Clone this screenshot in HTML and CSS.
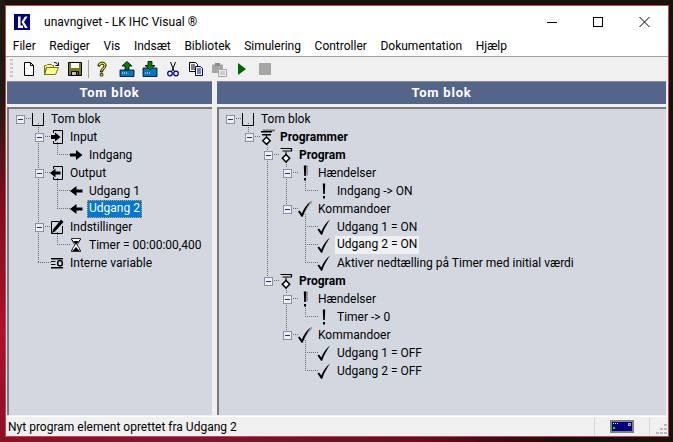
FILE: index.html
```html
<!DOCTYPE html>
<html lang="da">
<head>
<meta charset="utf-8">
<title>unavngivet - LK IHC Visual</title>
<link rel="stylesheet" href="styles.css">
</head>
<body>
<svg class="defs" width="0" height="0">
  <defs>
    <symbol id="box" viewBox="0 0 9 9"><rect x=".5" y=".5" width="8" height="8" fill="#eceef2" stroke="#8d939c"/><path d="M2 4.500h5" stroke="#1b2f8f"/></symbol>
    <symbol id="block" viewBox="0 0 14 16"><path d="M1.500 2v12.500h11V2" fill="none" stroke="#000"/></symbol>
    <symbol id="input" viewBox="0 0 14 16"><path d="M3.500 4V1.500h9v13h-9V12" fill="none" stroke="#000"/><path d="M1 6h4V3.500L10.500 8 5 12.500V10H1z"/></symbol>
    <symbol id="output" viewBox="0 0 14 16"><path d="M3.500 4V1.500h9v13h-9V12" fill="none" stroke="#000"/><path d="M10.500 6.500h-5V3.500L0 8l5.500 4.500v-3h5z"/></symbol>
    <symbol id="right" viewBox="0 0 14 16"><path d="M1 6.500h6V3l6.500 5L7 13V9.500H1z"/></symbol>
    <symbol id="left" viewBox="0 0 14 16"><path d="M13.500 6.500h-6V3L1 8l6.500 5V9.500h6z"/></symbol>
    <symbol id="settings" viewBox="0 0 14 16"><path d="M9 2.500H1.500v12h11V7" fill="none" stroke="#000"/><path d="M11 .5l2.500 2.500L5 12.500l-3 1.500 1-3.500z"/></symbol>
    <symbol id="hourglass" viewBox="0 0 14 16"><path d="M2.500 1.500h9v1.500h-1v1.500L8 8l2.500 3.500V13h1v1.500h-9V13h1v-1.500L6 8 3.500 4.500V3h-1z" fill="#fff" stroke="#000" stroke-width=".8"/><path d="M4 4h6L7 8zM3.500 14 7 10l3.500 4z"/></symbol>
    <symbol id="vars" viewBox="0 0 14 16"><path d="M1 3h12v1.500H1zM1 12h12v1.500H1z"/><path d="M1 6.500h4.500M1 9.500h4.500" stroke="#000" fill="none"/><rect x="7.750" y="5.750" width="4.500" height="5" rx="1.500" fill="none" stroke="#000" stroke-width="1.500"/></symbol>
    <symbol id="progs" viewBox="0 0 15 16"><path d="M3 .5h12v2H3z" fill="#777"/><path d="M1 2h11v1.500H1zM2 5h9v1.500H2zM6 6h1v2H6z"/><path d="M6.500 8l3.700 3.700-3.700 3.700-3.700-3.700z" fill="#fff" stroke="#000" stroke-width="1.500"/></symbol>
    <symbol id="prog" viewBox="0 0 14 16"><path d="M1.500 1.500h11v2.500h-9" fill="none" stroke="#000" stroke-width="1.200"/><path d="M6.500 4.500h1V8h-1z"/><path d="M7 7.500l3.700 3.700L7 15l-3.700-3.800z" fill="#fff" stroke="#000" stroke-width="1.500"/></symbol>
    <symbol id="bang" viewBox="0 0 14 16"><path d="M5.800 .5h2.400L7.800 11H6.200zM6 13h2v2.500H6z"/></symbol>
    <symbol id="bangs" viewBox="0 0 14 16"><path d="M7.500 .5h2.500v10H7.500z" fill="#999"/><path d="M5.800 .5h2.400L7.800 11H6.200zM6 13h2v2.500H6z"/></symbol>
    <symbol id="check" viewBox="0 0 14 16"><path d="M.5 10.500l1.500-1 2.300 3C6 8 9 3.500 13 .5 10 5 7 10 5.200 15.800H4z"/></symbol>
    <symbol id="checks" viewBox="0 0 14 16"><path d="M5 14C7 9 10 4 14 .5" fill="none" stroke="#999" stroke-width="1.800"/><path d="M0 10.500l1.500-1 2.300 3C5.500 8 8.500 3.500 12.500 .5 9.500 5 6.500 10 4.700 15.800H3.500z"/></symbol>
  </defs>
</svg>

<div class="window">
  <header class="titlebar">
    <svg class="logo" width="16" height="16" viewBox="0 0 16 16"><rect width="16" height="16" fill="#000080"/><path d="M4 2.500h2.500v9H9V14H4zM7.500 8 11 2.500h2.500L10 8l3.800 6h-2.700z" fill="#fff"/></svg>
    <span class="title">unavngivet - LK IHC Visual ®</span>
    <div class="controls">
      <svg width="46" height="14" viewBox="0 0 46 14"><path d="M0 7.500h10" stroke="#000"/></svg>
      <svg width="46" height="14" viewBox="0 0 46 14"><rect x=".5" y="2.500" width="9" height="9" fill="none" stroke="#000"/></svg>
      <svg width="12" height="14" viewBox="0 0 12 14"><path d="M.5 2l10 10M10.500 2l-10 10" stroke="#000" fill="none"/></svg>
    </div>
  </header>

  <nav class="menu">
    <span class="menu-item">Filer</span>
    <span class="menu-item">Rediger</span>
    <span class="menu-item">Vis</span>
    <span class="menu-item">Indsæt</span>
    <span class="menu-item">Bibliotek</span>
    <span class="menu-item">Simulering</span>
    <span class="menu-item">Controller</span>
    <span class="menu-item">Dokumentation</span>
    <span class="menu-item">Hjælp</span>
  </nav>

  <div class="toolbar">
    <span class="grip"></span>
    <svg class="tool" width="16" height="16" viewBox="0 0 16 16"><path d="M3.500 1.500h6l3 3v10h-9z" fill="#fff" stroke="#000"/><path d="M9.500 1.500v3h3" fill="none" stroke="#000"/></svg>
    <svg class="tool" width="16" height="16" viewBox="0 0 16 16"><path d="M.5 13.500v-9h2l1-1h4l1 1h1v2h-7l-2 7 2-7h12l-3 7z" fill="#ffff99" stroke="#7a7a00"/><path d="M10 1.500c2 0 3 .5 3.500 2M14.500 1.500v3h-3" fill="none" stroke="#000"/></svg>
    <svg class="tool t-save" width="16" height="16" viewBox="0 0 16 16"><path d="M1.500 1.500h13v13h-13z" fill="#808000" stroke="#000"/><path d="M4 2h8v5H4z" fill="#fff"/><path d="M4.500 10.500h7v4h-7z" fill="#c0c0c0" stroke="#000"/><path d="M9 11h1.500v3H9z"/></svg>
    <span class="tool-sep"></span>
    <svg class="tool t-help" width="16" height="16" viewBox="0 0 16 16"><path d="M4 5c0-5 8-5 8-.500 0 3-3.500 3.500-3.500 6.500H6.500c0-3.500 3.500-4 3.500-6.500 0-2-4-1.500-4 .500z" fill="#ff0" stroke="#000"/><path d="M6.300 12.500h2.500v2.500H6.300z" fill="#ff0" stroke="#000" stroke-width=".8"/></svg>
    <svg class="tool" width="16" height="16" viewBox="0 0 16 16"><path d="M1 9h14v6.500H1z" fill="#0078c8" stroke="#000" stroke-width=".8"/><path d="M3 12h1M5 12h1M7 12h1" stroke="#fff"/><path d="M8 .500 13 5h-3v4H6V5H3z" fill="#008000" stroke="#000" stroke-width=".8"/></svg>
    <svg class="tool" width="16" height="16" viewBox="0 0 16 16"><path d="M1 7h14v8.500H1z" fill="#0078c8" stroke="#000" stroke-width=".8"/><path d="M3 12h1M5 12h1M7 12h1" stroke="#fff"/><path d="M6 .500h4v4h3L8 9 3 4.500h3z" fill="#008000" stroke="#000" stroke-width=".8"/></svg>
    <svg class="tool" width="16" height="16" viewBox="0 0 16 16"><path d="M5.500 1 9 10M10.500 1 7 10" fill="none" stroke="#000"/><circle cx="5" cy="12.500" r="2.300" fill="none" stroke="#000080" stroke-width="1.200"/><circle cx="11" cy="12.500" r="2.300" fill="none" stroke="#000080" stroke-width="1.200"/></svg>
    <svg class="tool" width="16" height="16" viewBox="0 0 16 16"><path d="M1.500 1.500h6l2 2v7h-8z" fill="#fff" stroke="#000"/><path d="M3 4h4M3 6h4M3 8h4" stroke="#000"/><path d="M7.500 5.500h5l2 2v7h-7z" fill="#fff" stroke="#000080"/><path d="M9 8h4M9 10h4M9 12h4" stroke="#000080"/></svg>
    <svg class="tool" width="16" height="16" viewBox="0 0 16 16"><path d="M1 3.500h11V12H1z" fill="#a6a6a6"/><path d="M4 2h5v3H4z" fill="#8a8a8a"/><path d="M7.500 8.500h8v7h-8z" fill="#f0f0f0" stroke="#a6a6a6"/><path d="M9 11h5M9 13h5" stroke="#a6a6a6"/></svg>
    <svg class="tool" width="16" height="16" viewBox="0 0 16 16"><path d="M4 2l8 6-8 6z" fill="#006400"/></svg>
    <svg class="tool" width="16" height="16" viewBox="0 0 16 16"><rect x="2" y="2" width="12" height="12" fill="#a6a6a6"/></svg>
  </div>

  <main class="panes">
    <section class="pane pane-left">
      <h2 class="pane-head">Tom blok</h2>
      <div class="pane-body">
        <svg class="lines" width="204" height="306" viewBox="7 107 204 306">
          <path d="M24 118.500h8M38.500 123v139M43 136.500h8M43 172.500h8M43 226.500h8M38 262.500h13M57.500 142v12.500M57 154.500h13M57.500 178v30.500M57 190.500h13M57 208.500h13M57.500 232v12.500M57 244.500h13"/>
        </svg>
        <ul class="tree">
          <li class="row l0"><svg class="bx"><use href="#box"/></svg><svg class="ic"><use href="#block"/></svg><span class="tx">Tom blok</span></li>
          <li class="row l1"><svg class="bx"><use href="#box"/></svg><svg class="ic"><use href="#input"/></svg><span class="tx">Input</span></li>
          <li class="row l2"><svg class="ic"><use href="#right"/></svg><span class="tx">Indgang</span></li>
          <li class="row l1"><svg class="bx"><use href="#box"/></svg><svg class="ic"><use href="#output"/></svg><span class="tx">Output</span></li>
          <li class="row l2"><svg class="ic"><use href="#left"/></svg><span class="tx">Udgang 1</span></li>
          <li class="row l2"><svg class="ic"><use href="#left"/></svg><span class="tx selected">Udgang 2</span></li>
          <li class="row l1"><svg class="bx"><use href="#box"/></svg><svg class="ic"><use href="#settings"/></svg><span class="tx">Indstillinger</span></li>
          <li class="row l2"><svg class="ic"><use href="#hourglass"/></svg><span class="tx">Timer = 00:00:00,400</span></li>
          <li class="row l1b"><svg class="ic"><use href="#vars"/></svg><span class="tx">Interne variable</span></li>
        </ul>
      </div>
    </section>
    <section class="pane pane-right">
      <h2 class="pane-head">Tom blok</h2>
      <div class="pane-body">
        <svg class="lines" width="449" height="306" viewBox="217 107 449 306">
          <path d="M234 118.500h8M248.500 123v9M253 136.500h7M267.500 141v135M272 154.500h7M286.500 160v8M291 172.500h7M286.500 177v27M291 208.500h7M305.500 178v12.500M305 190.500h13M305.500 214v48.500M305 226.500h13M305 244.500h13M305 262.500h13M272 280.500h7M286.500 286v8M291 298.500h7M286.500 303v27M291 334.500h7M305.500 304v12.500M305 316.500h13M305.500 340v30.500M305 352.500h13M305 370.500h13"/>
        </svg>
        <ul class="tree">
          <li class="row r0"><svg class="bx"><use href="#box"/></svg><svg class="ic"><use href="#block"/></svg><span class="tx">Tom blok</span></li>
          <li class="row r1"><svg class="bx"><use href="#box"/></svg><svg class="ic ic-w"><use href="#progs"/></svg><span class="tx bold">Programmer</span></li>
          <li class="row r2"><svg class="bx"><use href="#box"/></svg><svg class="ic"><use href="#prog"/></svg><span class="tx bold">Program</span></li>
          <li class="row r3"><svg class="bx"><use href="#box"/></svg><svg class="ic"><use href="#bangs"/></svg><span class="tx">Hændelser</span></li>
          <li class="row r4"><svg class="ic"><use href="#bang"/></svg><span class="tx">Indgang -&gt; ON</span></li>
          <li class="row r3"><svg class="bx"><use href="#box"/></svg><svg class="ic"><use href="#checks"/></svg><span class="tx">Kommandoer</span></li>
          <li class="row r4"><svg class="ic"><use href="#check"/></svg><span class="tx">Udgang 1 = ON</span></li>
          <li class="row r4"><svg class="ic"><use href="#check"/></svg><span class="tx hover">Udgang 2 = ON</span></li>
          <li class="row r4"><svg class="ic"><use href="#check"/></svg><span class="tx">Aktiver nedtælling på Timer med initial værdi</span></li>
          <li class="row r2"><svg class="bx"><use href="#box"/></svg><svg class="ic"><use href="#prog"/></svg><span class="tx bold">Program</span></li>
          <li class="row r3"><svg class="bx"><use href="#box"/></svg><svg class="ic"><use href="#bangs"/></svg><span class="tx">Hændelser</span></li>
          <li class="row r4"><svg class="ic"><use href="#bang"/></svg><span class="tx">Timer -&gt; 0</span></li>
          <li class="row r3"><svg class="bx"><use href="#box"/></svg><svg class="ic"><use href="#checks"/></svg><span class="tx">Kommandoer</span></li>
          <li class="row r4"><svg class="ic"><use href="#check"/></svg><span class="tx">Udgang 1 = OFF</span></li>
          <li class="row r4"><svg class="ic"><use href="#check"/></svg><span class="tx">Udgang 2 = OFF</span></li>
        </ul>
      </div>
    </section>
  </main>

  <footer class="status">
    <span class="status-text">Nyt program element oprettet fra Udgang 2</span>
    <span class="status-cell">
      <svg width="24" height="13" viewBox="0 0 24 13"><rect x="1" y="1" width="22" height="11" fill="#000080" stroke="#808080" stroke-width="2"/><path d="M3 3h1v1H3zM5 3h1v1H5zM7 3h1v1H7z" fill="#fff"/><rect x="3" y="7" width="2" height="2" fill="#00ff00"/><rect x="18.500" y="3.500" width="2" height="2" fill="#444" stroke="#aaa"/></svg>
    </span>
    <span class="status-grip">
      <svg width="12" height="12" viewBox="0 0 12 12"><path d="M8 0h3v2H8zM4 4h3v2H4zM8 4h3v2H8zM0 8h3v2H0zM4 8h3v2H4zM8 8h3v2H8z" fill="#b8b8b8"/></svg>
    </span>
  </footer>
</div>
</body>
</html>
```

FILE: styles.css
```css
* { box-sizing: border-box; }
html, body { margin: 0; height: 100%; }
body {
  width: 673px;
  height: 442px;
  padding: 5px 4px 5px 5px;
  overflow: hidden;
  font-family: Roboto, "Open Sans", sans-serif;
  font-size: 12px;
  color: #000;
  background-color: #14130c;
  background-image:
    linear-gradient(180deg, #1b1c12 0, #1c1a10 95px, #7d0c1c 200px, #b20f2e 330px, #8c1026 442px),
    linear-gradient(90deg, #8c1026 0, #7c1830 200px, #60101f 420px, #1c0c0c 560px, #14130c 673px);
  background-size: 5px 100%, 100% 5px;
  background-position: 0 0, 0 100%;
  background-repeat: no-repeat;
}
.defs { position: absolute; }
.window {
  height: 432px;
  width: 664px;
  border: 1px solid #c9404f;
  background: #f0f0f0;
  display: flex;
  flex-direction: column;
}
.titlebar {
  height: 31px;
  flex: none;
  display: flex;
  align-items: center;
  background: #fff;
  padding: 0 17px 0 8px;
}
.logo { flex: none; }
.title { margin-left: 14px; font-size: 12px; letter-spacing: .05px; }
.controls { margin-left: auto; display: flex; align-items: center; }
.menu {
  height: 20px;
  flex: none;
  display: flex;
  align-items: center;
  background: #fff;
  border-bottom: 1px solid #a0a0a0;
}
.menu-item { padding: 0 6.8px 2px; }
.toolbar {
  height: 23px;
  flex: none;
  display: flex;
  align-items: center;
  padding-left: 4px;
  background: #f0f0f0;
}
.grip {
  width: 3px;
  height: 20px;
  margin-right: 8px;
  background: repeating-linear-gradient(180deg, #c8c8c8 0 2px, transparent 2px 4px);
}
.tool { flex: none; margin-right: 7px; }
.t-save { margin-right: 5px; }
.t-help { margin-right: 9px; }
.tool-sep { width: 1px; height: 18px; background: #a0a0a0; margin-right: 5px; }
.panes {
  flex: 1;
  min-height: 0;
  display: flex;
  gap: 5px;
  padding: 1px 2px 1px 1px;
}
.pane { display: flex; flex-direction: column; }
.pane-left { width: 205px; }
.pane-right { flex: 1; min-width: 0; }
.pane-head {
  margin: 0;
  height: 23px;
  flex: none;
  border-top: 1px solid #8a8a8a;
  background: #54658a;
  color: #fff;
  font-size: 13px;
  font-weight: 700;
  line-height: 21px;
  text-align: center;
  letter-spacing: .8px;
}
.pane-body {
  position: relative;
  margin-top: 3px;
  flex: 1;
  min-height: 0;
  background: #d3d8e0;
  border-top: 2px solid #7a7a7a;
  border-left: 2px solid #7a7a7a;
  overflow: hidden;
}
.lines {
  position: absolute;
  left: -2px;
  top: -2px;
  fill: none;
  stroke: #6e6e6e;
  stroke-dasharray: 1 1;
  shape-rendering: crispEdges;
}
.tree { list-style: none; margin: 0; padding: 1px 0 0; position: relative; }
.row { height: 18px; display: flex; align-items: center; white-space: nowrap; }
.bx { width: 9px; height: 9px; flex: none; margin-right: 6px; }
.ic { width: 14px; height: 16px; flex: none; margin-right: 4px; }
.ic-w { width: 15px; margin-right: 3px; }
.tx { padding: 0 2px; line-height: 16px; }
.bold { font-weight: 700; }
.selected {
  background: #0078d7;
  color: #fff;
  outline: 1px dotted #d8a040;
  outline-offset: -1px;
  height: 18px;
  line-height: 17px;
}
.hover { background: #eef0f1; height: 18px; line-height: 17px; }

.l0 { padding-left: 7px; }
.l1 { padding-left: 26px; }
.l1b { padding-left: 41px; }
.l2 { padding-left: 60px; }

.r0 { padding-left: 7px; }
.r1 { padding-left: 26px; }
.r2 { padding-left: 45px; }
.r3 { padding-left: 64px; }
.r4 { padding-left: 98px; }

.status {
  height: 20px;
  flex: none;
  display: flex;
  align-items: center;
  background: #f0f0f0;
  border-top: 1px solid #fff;
}
.status-text { flex: 1; padding-left: 2px; }
.status-cell {
  width: 56px;
  height: 18px;
  display: flex;
  align-items: center;
  justify-content: center;
  border-left: 1px solid #d8d8d8;
  border-right: 1px solid #d8d8d8;
}
.status-grip { width: 18px; display: flex; justify-content: flex-end; align-items: flex-end; height: 18px; }
```
